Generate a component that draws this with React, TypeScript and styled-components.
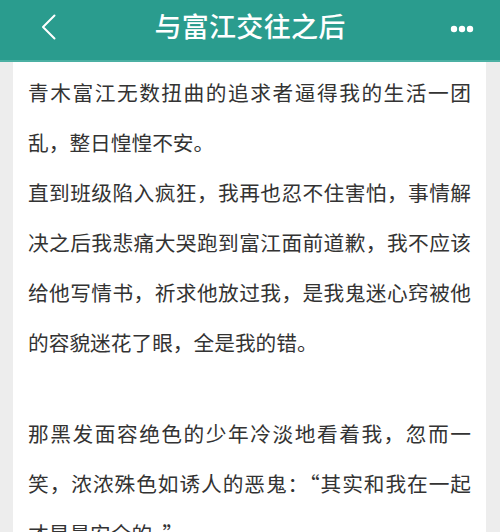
import React from 'react'
import styled, { createGlobalStyle } from 'styled-components'

const GlobalStyle = createGlobalStyle`
  html, body {
    margin: 0;
    padding: 0;
    background: #ededed;
  }
  body {
    font-family: "Noto Sans CJK SC", "Noto Sans", sans-serif;
  }
`

const Page = styled.div`
  width: 500px;
  height: 532px;
  overflow: hidden;
  display: flex;
  flex-direction: column;
  background: #ededed;
`

const Header = styled.header`
  flex: none;
  height: 60px;
  display: grid;
  grid-template-columns: 80px 1fr 80px;
  align-items: center;
  background: #2a9c8e;
  border-bottom: 2px solid #4bb0a3;
`

const IconButton = styled.div<{ align: 'start' | 'end' }>`
  display: flex;
  justify-content: ${({ align }) => (align === 'start' ? 'flex-start' : 'flex-end')};
  align-items: center;
  padding: ${({ align }) => (align === 'start' ? '0 0 6px 41px' : '0 26px 2px 0')};
`

const Title = styled.h1`
  margin: 0 0 10px;
  text-align: center;
  color: #ffffff;
  font-size: 27px;
  font-weight: 500;
  letter-spacing: 0.3px;
`

const Body = styled.main`
  flex: 1;
  margin: 0 14px 0 13px;
  padding: 5px 15px 0 15px;
  background: #ffffff;
`

const Paragraph = styled.p`
  margin: 0;
  color: #333333;
  font-size: 20.7px;
  line-height: 50px;
  text-align: justify;
`

const Spacer = styled.div`
  height: 41px;
`

function BackIcon() {
  return (
    <svg width="16" height="26" viewBox="0 0 16 26" fill="none">
      <polyline points="13.5,1.5 2,13 13.5,24.5" stroke="#ffffff" strokeWidth="2" strokeLinecap="round" strokeLinejoin="round" />
    </svg>
  )
}

function MoreIcon() {
  return (
    <svg width="24" height="8" viewBox="0 0 24 8">
      <circle cx="4" cy="4" r="3.2" fill="#ffffff" />
      <circle cx="12" cy="4" r="3.2" fill="#ffffff" />
      <circle cx="20" cy="4" r="3.2" fill="#ffffff" />
    </svg>
  )
}

export default function App() {
  return (
    <Page>
      <GlobalStyle />
      <Header>
        <IconButton align="start">
          <BackIcon />
        </IconButton>
        <Title>与富江交往之后</Title>
        <IconButton align="end">
          <MoreIcon />
        </IconButton>
      </Header>
      <Body>
        <Paragraph>青木富江无数扭曲的追求者逼得我的生活一团乱，整日惶惶不安。</Paragraph>
        <Paragraph>
          直到班级陷入疯狂，我再也忍不住害怕，事情解决之后我悲痛大哭跑到富江面前道歉，我不应该给他写情书，祈求他放过我，是我鬼迷心窍被他的容貌迷花了眼，全是我的错。
        </Paragraph>
        <Spacer />
        <Paragraph>
          那黑发面容绝色的少年冷淡地看着我，忽而一笑，浓浓殊色如诱人的恶鬼：“其实和我在一起才是最安全的。”
        </Paragraph>
      </Body>
    </Page>
  )
}
